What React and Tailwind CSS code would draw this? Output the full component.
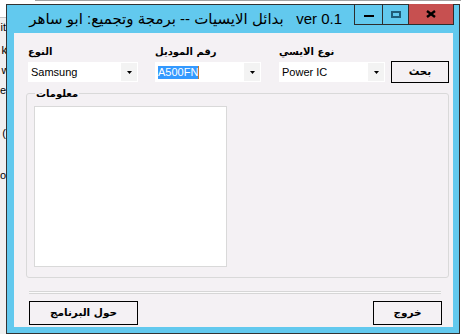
import React from 'react'

const ui = { fontFamily: '"Liberation Sans","DejaVu Sans",sans-serif' }
const ar = { fontFamily: '"DejaVu Sans",sans-serif' }

function Arrow(){
  return (
    <svg width="5" height="3" viewBox="0 0 5 3"><polygon points="0,0 5,0 2.5,3" fill="#000" /></svg>
  )
}

function Combo({ width, children }){
  return (
    <div className={`h-[20px] bg-white flex items-center ${width}`}>
      <div className="flex-1 flex items-center pl-[3px] text-[11px] leading-[13px] text-black" style={ui}>{children}</div>
      <div className="w-[16px] h-[18px] mr-[1px] bg-[#f3f3f3] flex items-center justify-center"><Arrow /></div>
    </div>
  )
}

function Field({ label, width, children, className = '' }){
  return (
    <div className={`flex flex-col items-start ${className}`}>
      <div dir="rtl" className="h-[13px] text-[10px] leading-[13px] font-bold text-black" style={ar}>{label}</div>
      <div className="mt-[4px]"><Combo width={width}>{children}</Combo></div>
    </div>
  )
}

function FormButton({ width, children, className = '' }){
  return (
    <div dir="rtl" className={`h-[24px] border border-black bg-[#f4f1f4] flex items-center justify-center text-[10.5px] font-bold text-black ${width} ${className}`} style={ar}>{children}</div>
  )
}

export default function App(){
  return (
    <div className="w-[461px] h-[334px] flex bg-white overflow-hidden">
      {/* desktop behind the window */}
      <div className="w-[6px] flex flex-col overflow-hidden">
        <div className="h-[17px] bg-white" />
        <div className="flex-1 border-t border-[#c4c4c4] bg-[#f0f0f0] flex flex-col items-end text-[11px] leading-[14px] text-black whitespace-nowrap" style={ui}>
          <div className="mt-[2px]">it</div>
          <div className="mt-[9px] tracking-[-2px]">kt</div>
          <div className="mt-[6px] tracking-[-3px]">wi</div>
          <div className="mt-[6px]">e</div>
          <div className="mt-[29px]">(</div>
          <div className="mt-[28px]">o</div>
        </div>
      </div>

      <div className="flex-1 flex flex-col">
        <div className="h-[4px] pl-[29px]"><div className="h-px bg-[#a3a3a3]" /></div>
        <div className="flex">
          {/* window */}
          <div className="w-[454px] h-[330px] border border-[#333] bg-[#62c9ee] flex flex-col">
            <div className="h-[28px] flex justify-end items-start pr-[5px]">
              <div dir="rtl" className="self-center mr-[12px] text-[15px] leading-[18px] text-black whitespace-pre" style={ui}>{'ver 0.1   بدائل الايسيات -- برمجة وتجميع: ابو ساهر'}</div>
              <div className="w-[100px] h-[21px] -mt-px border-x border-b border-[#2d2d2d] flex">
                <div className="w-[27px] flex justify-center pt-[11px]"><div className="w-[10px] h-[2px] bg-black" /></div>
                <div className="w-[26px] border-l border-[#2d2d2d] flex justify-center pt-[7px]"><div className="w-[10px] h-[7px] border-2 border-[#1f5d79]" /></div>
                <div className="flex-1 border-l border-[#2d2d2d] bg-[#c75050] flex justify-center pt-[6px]">
                  <svg width="10" height="8" viewBox="0 0 10 8"><path d="M1 1 L9 7 M9 1 L1 7" stroke="#000" strokeWidth="2.4" /></svg>
                </div>
              </div>
            </div>

            {/* client area */}
            <div className="ml-[7px] w-[439px] h-[294px] bg-[#f4f1f4] flex flex-col">
              <div className="flex items-start pt-[12px] pl-[14px]">
                <Field label="النوع" width="w-[110px]">Samsung</Field>
                <Field label="رقم الموديل" width="w-[106px]" className="ml-[17px]">
                  <span className="bg-[#3399ff] text-white">A500FN</span>
                  <span className="w-px h-[13px] bg-[#c8782e]" />
                </Field>
                <Field label="نوع الايسي" width="w-[106px]" className="ml-[18px]">Power IC</Field>
                <FormButton width="w-[58px]" className="ml-[6px] mt-[16px] !h-[22px]">بحث</FormButton>
              </div>

              <div className="relative mt-[10px] ml-[12px] w-[423px] h-[185px] border border-[#d9d9d9] rounded-[3px]">
                <div dir="rtl" className="absolute -top-[7px] left-[8px] px-px bg-[#f4f1f4] text-[10px] leading-[13px] font-bold text-black" style={ar}>معلومات</div>
                <div className="mt-[12px] ml-[7px] w-[193px] h-[161px] bg-white border border-[#d9d9d9]" />
              </div>

              <div className="mt-[13px] ml-[15px] w-[412px] h-[3px] border-y border-[#d6d6d6] bg-[#fbfbfb]" />

              <div className="mt-[7px] flex justify-between pl-[15px] pr-[11px]">
                <FormButton width="w-[109px]">حول البرنامج</FormButton>
                <FormButton width="w-[69px]">خروج</FormButton>
              </div>
            </div>
          </div>
          <div className="w-px" />
        </div>
      </div>
    </div>
  )
}
